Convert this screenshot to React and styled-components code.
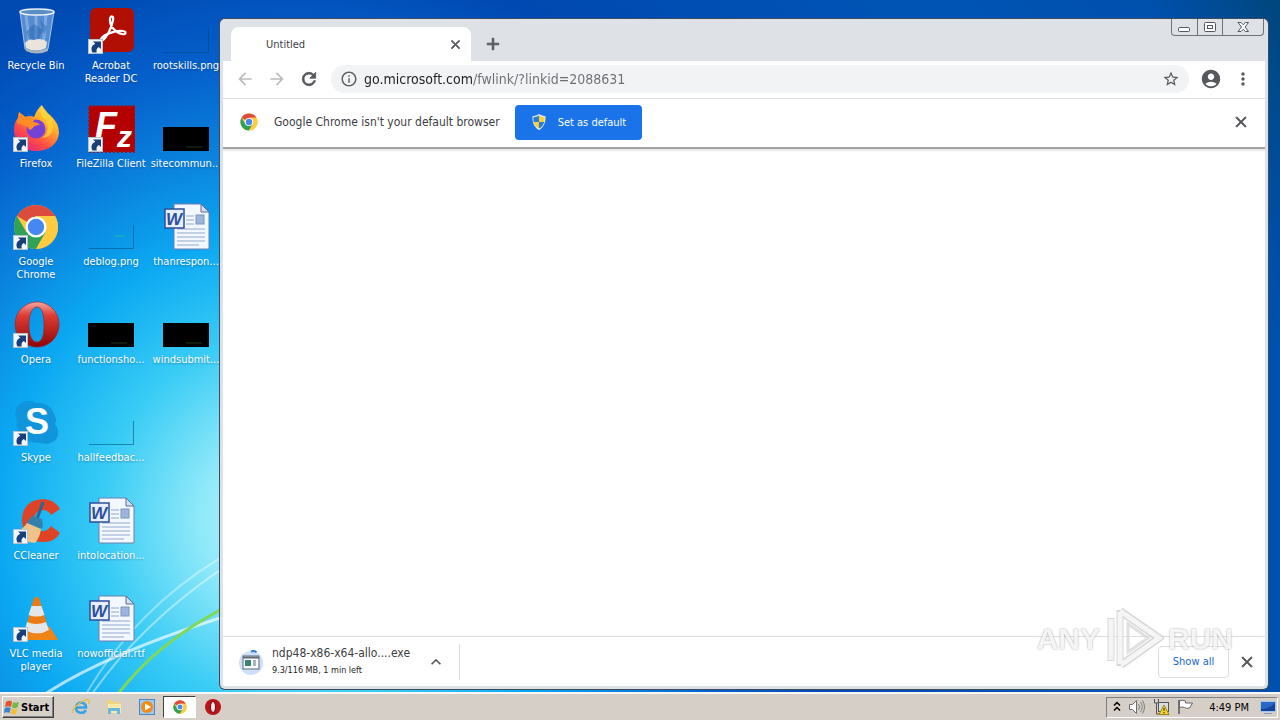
import React, { useState } from "react";
import styled, { createGlobalStyle, css } from "styled-components";
import {
  MdAccountCircle,
  MdAdd,
  MdArrowBack,
  MdArrowForward,
  MdClose,
  MdInfoOutline,
  MdKeyboardArrowUp,
  MdMoreVert,
  MdRefresh,
  MdStarBorder,
} from "react-icons/md";

const Shortcut = () => (
  <g>
    <rect x="1.5" y="32.5" width="14" height="14" fill="#f4f7fa" stroke="#b4c2cf" />
    <path d="M6 34.500h8v7.500l-2.200-2c-2 1.200-2.800 3-2 5.500H5.500c-2-3.500-1-7 2.800-8.700z" fill="#173f7c" />
  </g>
);

const ChromeMark = () => (
  <g>
    <circle cx="24" cy="24" r="22" fill="#fbc93d" />
    <path d="M24 24L4.950 13A22 22 0 0 1 43.050 13H24z" fill="#dd4b3e" />
    <path d="M4.950 13A22 22 0 0 0 24 46l9.500-16.500L24 24l-9.500 5.500z" fill="#2fa257" />
    <path d="M24 13h19.050A22 22 0 0 1 24 46l9.500-16.500z" fill="#fdcc40" />
    <circle cx="24" cy="24" r="10.500" fill="#fff" />
    <circle cx="24" cy="24" r="8.200" fill="#4688f1" />
  </g>
);

const RecycleBinIcon = () => (
  <g>
    <path d="M8 5l5 37q11 6 23 0L42 5z" fill="#bcdcf5" fillOpacity=".45" stroke="#d7e6f2" strokeOpacity=".7" />
    <path d="M14 8l4 33M24 8v34M34 8l-3 33" stroke="#dcefff" strokeOpacity=".3" strokeWidth="3" />
    <path d="M14 25l8-8 9 6-4 9-9 2zM28 13l7 7-3 8" fill="#2464ad" fillOpacity=".45" />
    <path d="M13 36q4-5 9-3 8-3 13 2l-1 6q-10 5-20 0z" fill="#e9e4dc" />
    <path d="M13 41q11 6 23 0v3q-11 5-22 0z" fill="#aab3ba" />
    <ellipse cx="25" cy="5" rx="17" ry="3" fill="#5b8fc4" stroke="#e8f1f7" strokeWidth="1.500" />
  </g>
);

const AcrobatIcon = () => (
  <g>
    <rect x="3" y="1" width="44" height="44" rx="6" fill="#b20f04" />
    <path
      d="M14 32c2-4 14-9 22-8 4 .5 3 4-1 3-6-1-13-8-12-15 .3-4 4-3 3 1-1 7-6 17-10 20-2 1-3 0-2-1z"
      fill="none"
      stroke="#fff"
      strokeWidth="2.200"
    />
    <Shortcut />
  </g>
);

const FirefoxIcon = () => (
  <g>
    <defs>
      <linearGradient id="fox" x1=".9" y1="0" x2=".2" y2="1">
        <stop offset="0" stopColor="#fff14a" />
        <stop offset=".35" stopColor="#ffb02a" />
        <stop offset=".7" stopColor="#ff4d45" />
        <stop offset="1" stopColor="#e0208c" />
      </linearGradient>
    </defs>
    <path
      d="M30 0q2 6 8 10 9 8 9 18c-1 11-10 18-23 18S2 38 2 25q0-8 4-12l1-6q4 3 6 5 5-2 9 0 3-8 8-12z"
      fill="url(#fox)"
    />
    <circle cx="24" cy="24" r="9.500" fill="#7542d8" />
    <path d="M7 7q5 4 8 6 5-1 8 1l-2 3q5 0 7 3-6 0-8 4-4 2-4-2L5 18z" fill="#ff8c25" />
    <path d="M30 1c-4 8 1 11 4 16 4 6 1 14-5 16 8 0 13-5 12-14Q38 9 30 1z" fill="#ffd43a" fillOpacity=".75" />
    <Shortcut />
  </g>
);

const FileZillaIcon = () => (
  <g>
    <rect x="2" y="1" width="46" height="46" fill="#b40000" stroke="#8d1c26" strokeDasharray="2 2" strokeWidth="2" />
    <text x="8" y="33" fill="#fff" fontFamily="Liberation Sans" fontSize="36" fontWeight="700" fontStyle="italic">
      F<tspan fontSize="30" dy="9">z</tspan>
    </text>
    <Shortcut />
  </g>
);

const ChromeIcon = () => (
  <g>
    <ChromeMark />
    <Shortcut />
  </g>
);

const OperaIcon = () => (
  <g>
    <defs>
      <linearGradient id="opera" x1="0" y1="0" x2="0" y2="1">
        <stop offset="0" stopColor="#f7a7a0" />
        <stop offset=".3" stopColor="#dd3c35" />
        <stop offset="1" stopColor="#8f0507" />
      </linearGradient>
    </defs>
    <path
      d="M25 1a22 22.500 0 1 0 .1 0zM25 6c5 0 7 7 7 18s-2 17-7 17-8-6-8-17S20 6 25 6z"
      fill="url(#opera)"
      fillRule="evenodd"
      stroke="#a21f1f"
      strokeWidth=".6"
    />
    <Shortcut />
  </g>
);

const SkypeIcon = () => (
  <g>
    <path d="M14 2q6-1 10 2 16-1 20 16 0 3-1 5 5 7 2 14-6 8-16 5Q11 45 5 29q-1-4 0-8-4-7 1-14 3-4 8-5z" fill="#1095dc" />
    <text x="25" y="35" fill="#fff" textAnchor="middle" fontFamily="Liberation Sans" fontSize="36" fontWeight="700">S</text>
    <Shortcut />
  </g>
);

const CCleanerIcon = () => (
  <g>
    <path d="M48 12Q42 2 31 2 10 3 10 24q1 21 22 21 11 0 16-9l-9-7q-4 6-9 5-8-2-8-11t9-10q5 0 8 5z" fill="#df4325" />
    <path d="M31 5l-6 17" stroke="#236a9b" strokeWidth="3" />
    <path d="M15 25l5-6 10 3 1 8-3 2-13-5z" fill="#347fae" />
    <path d="M15 26l14 6q-1 8-6 14Q9 45 2 35q9-2 13-9z" fill="#efc48a" />
    <Shortcut />
  </g>
);

const VlcIcon = () => (
  <g>
    <path d="M14 32h24l8 13H10z" fill="#f08516" />
    <path d="M22 3q2-2 5 0l10 33q-12 7-24 0z" fill="#ee7a12" />
    <path d="M19.500 11h10l3 9q-8 3-16 0zM15 27q9 4 19 0l3 8q-12 7-24 0z" fill="#e4e6e8" />
    <Shortcut />
  </g>
);

const WordIcon = () => (
  <g>
    <path d="M12 1h27l8 8v37H12z" fill="#f3f7ff" stroke="#6b7fae" />
    <path d="M39 1v8h8z" fill="#d5def2" stroke="#5b6b92" />
    <path d="M24 13h8M24 17h8M24 21h8M15 26h28M15 30h28M15 34h28M15 38h28M15 42h22" stroke="#92a7cf" />
    <rect x="34" y="12" width="8" height="9" fill="#9db5dc" stroke="#7e93bd" />
    <rect x="3" y="6" width="19" height="19" fill="#e6efff" stroke="#2d509c" strokeWidth="1.500" />
    <text x="12" y="22" fill="#2d4e99" textAnchor="middle" fontFamily="Liberation Sans" fontSize="17" fontWeight="700" fontStyle="italic">W</text>
  </g>
);

const BlackImageIcon = () => (
  <g>
    <rect x="1" y="22" width="46" height="24" fill="#000" />
    <path d="M24 42h16" stroke="#1c3414" />
  </g>
);

const ClearImageIcon = () => (
  <path d="M2 45.500h44.500V22" fill="none" stroke="#004a78" strokeOpacity=".55" />
);

const DeblogImageIcon = () => (
  <g>
    <ClearImageIcon />
    <path d="M27 33h11" stroke="#28b7a6" />
  </g>
);

const StartFlag = () => (
  <svg width="16" height="16" viewBox="0 0 16 16">
    <path d="M2 3q3-2 6-.5L7 8Q4 6.500 1 8z" fill="#e2522c" />
    <path d="M9 3q3 1.500 6 0l-1.500 5.500q-3 1.500-5.500 0z" fill="#74b944" />
    <path d="M.8 9q3-1.500 6 0L5.500 14q-3-1.500-5.500 0z" fill="#3b83d2" />
    <path d="M7.800 9.500q3 1.500 5.500.2L12 15q-3 1-5.500-.5z" fill="#f5bd2f" />
  </svg>
);

const ExplorerIcon = () => (
  <svg width="18" height="18" viewBox="0 0 18 18">
    <path d="M4.500 9.500h9.500C14 3 4 3 4 9.700c0 6 8 6.500 9.700 2.300" fill="none" stroke="#38a3e4" strokeWidth="2.600" />
    <path d="M1 15C-1 10 13 0 17 2c1 1 0 3-1 4" fill="none" stroke="#e6bd43" strokeWidth="1.300" />
  </svg>
);

const FolderIcon = () => (
  <svg width="18" height="18" viewBox="0 0 18 18">
    <path d="M2 2h5l1 2h7v11H2z" fill="#f0d37a" />
    <path d="M3 6h13v9H3z" fill="#f9e9a9" />
    <path d="M3 16v-6h12v6h-3v-3H6v3z" fill="#69b8e2" />
  </svg>
);

const MediaIcon = () => (
  <svg width="18" height="18" viewBox="0 0 18 18">
    <rect x="1.500" y="1.500" width="15" height="15" fill="#9fc8ed" stroke="#4a87c7" />
    <circle cx="9" cy="9" r="6" fill="#f28a13" />
    <path d="M7 5.500l6 3.500-6 3.500z" fill="#fff" />
  </svg>
);

const ChromeSmall = ({ size }) => (
  <svg width={size} height={size} viewBox="1 1 46 46">
    <ChromeMark />
  </svg>
);

const OperaSmall = () => (
  <svg width="18" height="18" viewBox="0 0 18 18">
    <circle cx="9" cy="9" r="8" fill="#b8151a" />
    <ellipse cx="9" cy="9" rx="2.500" ry="5.500" fill="#f8e9e8" stroke="#7c0509" />
  </svg>
);

const ShieldIcon = () => (
  <svg width="16" height="16" viewBox="0 0 16 16">
    <path d="M8 0q3 2 6.500 2.200C15 9 12 14 8 16 4 14 1 9 1.500 2.200 5 2 8 0 8 0z" fill="#e8edf2" />
    <path d="M8 1.500V8H2.700q-.5-2-.3-4.800Q5.500 3 8 1.500zM8 8h5.300Q12 12.500 8 14.600z" fill="#2d7bd7" />
    <path d="M8 1.500V8h5.300q.5-2 .3-4.800Q10.500 3 8 1.500zM8 8H2.700Q4 12.500 8 14.600z" fill="#f8cf36" />
  </svg>
);

const DownloadIcon = () => (
  <svg width="26" height="28" viewBox="0 0 26 28">
    <circle cx="13" cy="15" r="12" fill="#cfe0fa" />
    <path d="M13 3.500q3-1.500 5.500.8" fill="none" stroke="#3577d4" strokeWidth="2" />
    <rect x="5" y="8" width="16" height="13" fill="#f6f8f9" stroke="#5b6a75" />
    <path d="M5 9.500h16" stroke="#5b6a75" strokeWidth="2" />
    <rect x="7" y="12" width="6" height="6" fill="#3d8174" />
    <path d="M15 13h3M15 15h3M15 17h3" stroke="#617079" />
  </svg>
);

const MinimizeIcon = () => (
  <svg width="13" height="12" viewBox="0 0 13 12">
    <rect x=".5" y="6.500" width="11" height="4" rx="1" fill="#fff" stroke="#53565e" />
  </svg>
);

const MaximizeIcon = () => (
  <svg width="13" height="12" viewBox="0 0 13 12">
    <rect x=".5" y="1.500" width="11" height="9" rx="1" fill="#fff" stroke="#53565e" />
    <rect x="3.500" y="4.500" width="5" height="3" fill="#fff" stroke="#53565e" />
  </svg>
);

const CloseWindowIcon = () => (
  <svg width="13" height="12" viewBox="0 0 13 12">
    <path d="M1 1.500h3l2.300 2.300 2.200-2.300h3L8 6l3.500 4.500h-3L6.300 8.200 4 10.500H1L4.500 6z" fill="#fff" stroke="#53565e" />
  </svg>
);

const SpeakerIcon = () => (
  <svg width="18" height="16" viewBox="0 0 18 16">
    <path d="M1.500 5.500h3l4-4v13l-4-4h-3z" fill="#fff" stroke="#6d6d6d" />
    <path d="M10.500 5q2 3 0 6M12.500 3q3.500 5 0 10M14.500 1.500q4 6.500 0 13" fill="none" stroke="#7d7d7d" />
  </svg>
);

const NetworkIcon = () => (
  <svg width="17" height="16" viewBox="0 0 17 16">
    <rect x="5.500" y="3.500" width="10" height="9" fill="#d8dde1" stroke="#555" />
    <path d="M1.500 0v4h4V0M3.500 4v11h5" fill="none" stroke="#555" />
    <path d="M11 6l5 9.500H6z" fill="#f8d62c" stroke="#9b8412" />
    <path d="M11 9v3M11 13v1.500" stroke="#222" />
  </svg>
);

const FlagIcon = () => (
  <svg width="17" height="16" viewBox="0 0 17 16">
    <path d="M2 1v14" stroke="#555" strokeWidth="1.500" />
    <path d="M2.500 2q3-1.500 6 0v2h7q-1 2-3 5-3 1-5-.5-2-1-5 0z" fill="#fff" stroke="#666" />
  </svg>
);

const ShowDesktopIcon = () => (
  <svg width="16" height="16" viewBox="0 0 16 16">
    <rect x=".5" y="2.500" width="15" height="10" fill="#2a68c4" stroke="#a8c4e4" />
    <path d="M1 10q8 0 14-6v8H1z" fill="#1743a0" />
    <path d="M4 14.500h8" stroke="#7ea0cc" />
  </svg>
);

const files = [
  { name: "Recycle Bin", Icon: RecycleBinIcon },
  { name: "Firefox", Icon: FirefoxIcon },
  { name: "Google Chrome", Icon: ChromeIcon },
  { name: "Opera", Icon: OperaIcon },
  { name: "Skype", Icon: SkypeIcon },
  { name: "CCleaner", Icon: CCleanerIcon },
  { name: "VLC media player", Icon: VlcIcon },
  { name: "Acrobat Reader DC", Icon: AcrobatIcon },
  { name: "FileZilla Client", Icon: FileZillaIcon },
  { name: "deblog.png", Icon: DeblogImageIcon },
  { name: "functionsho...", Icon: BlackImageIcon },
  { name: "hallfeedbac...", Icon: ClearImageIcon },
  { name: "intolocation...", Icon: WordIcon },
  { name: "nowofficial.rtf", Icon: WordIcon },
  { name: "rootskills.png", Icon: ClearImageIcon },
  { name: "sitecommun...", Icon: BlackImageIcon },
  { name: "thanrespon...", Icon: WordIcon },
  { name: "windsubmit...", Icon: BlackImageIcon },
];

const App = () => {
  const [url, setUrl] = useState("go.microsoft.com/fwlink/?linkid=2088631");

  return (
    <Screen>
      <GlobalStyle />
      <Desktop>
        <Streaks viewBox="0 0 220 692" width="220" height="692" aria-hidden="true">
          <path d="M45 694Q105 655 220 618" stroke="#fff" strokeOpacity=".65" strokeWidth="3" />
          <path d="M86 694Q135 610 220 558" stroke="#fff" strokeOpacity=".4" strokeWidth="2" />
          <path d="M92 694Q140 625 220 570" stroke="#fff" strokeOpacity=".45" strokeWidth="2" />
          <path d="M118 694Q155 645 220 610" stroke="#7fd85a" strokeWidth="3" />
        </Streaks>
        <FileGrid>
          {files.map(({ name, Icon }) => (
            <li key={name}>
              <FileButton>
                <svg width="48" height="48" viewBox="0 0 48 48" fill="none" aria-hidden="true">
                  <Icon />
                </svg>
                <FileName>{name}</FileName>
              </FileButton>
            </li>
          ))}
        </FileGrid>

        <Window>
          <TabStrip>
            <Tab>
              <TabTitle>Untitled</TabTitle>
              <IconButton $size={20} $bold aria-label="Close tab"><MdClose size={15} /></IconButton>
            </Tab>
            <IconButton $size={28} $bold aria-label="New tab"><MdAdd size={20} /></IconButton>
            <WindowControls>
              <WindowControl aria-label="Minimize"><MinimizeIcon /></WindowControl>
              <WindowControl aria-label="Maximize"><MaximizeIcon /></WindowControl>
              <WindowControl $wide aria-label="Close"><CloseWindowIcon /></WindowControl>
            </WindowControls>
          </TabStrip>

          <Toolbar>
            <NavGroup>
              <IconButton $size={28} $muted aria-label="Back"><MdArrowBack size={20} /></IconButton>
              <IconButton $size={28} $muted aria-label="Forward"><MdArrowForward size={20} /></IconButton>
              <IconButton $size={28} $bold aria-label="Reload"><MdRefresh size={20} /></IconButton>
            </NavGroup>
            <Omnibox>
              <MdInfoOutline size={18} />
              <UrlInput aria-label="Address" value={url} onChange={(e) => setUrl(e.target.value)} />
              <IconButton $size={20} aria-label="Bookmark"><MdStarBorder size={18} /></IconButton>
            </Omnibox>
            <NavGroup>
              <IconButton $size={28} aria-label="Profile"><MdAccountCircle size={22} /></IconButton>
              <IconButton $size={28} aria-label="Menu"><MdMoreVert size={20} /></IconButton>
            </NavGroup>
          </Toolbar>

          <InfoBar>
            <ChromeSmall size={18} />
            <InfoText>Google Chrome isn't your default browser</InfoText>
            <DefaultButton><ShieldIcon />Set as default</DefaultButton>
            <PushRight>
              <IconButton $size={28} $bold aria-label="Dismiss"><MdClose size={18} /></IconButton>
            </PushRight>
          </InfoBar>

          <PageArea />

          <DownloadBar>
            <DownloadItem>
              <DownloadIcon />
              <DownloadText>
                <DownloadName>ndp48-x86-x64-allo....exe</DownloadName>
                <DownloadStatus>9.3/116 MB, 1 min left</DownloadStatus>
              </DownloadText>
              <IconButton $size={20} aria-label="Download options"><MdKeyboardArrowUp size={20} /></IconButton>
            </DownloadItem>
            <PushRight>
              <ShowAll>Show all</ShowAll>
              <IconButton $size={20} $bold aria-label="Close downloads"><MdClose size={18} /></IconButton>
            </PushRight>
          </DownloadBar>

          <Watermark>
            ANY
            <svg width="60" height="66" viewBox="0 0 60 66" fill="none" aria-hidden="true">
              <path d="M7 12v43M16 4v56" stroke="#d0d0d0" strokeWidth="7" />
              <path d="M16 5l39 27-38 27" stroke="#d0d0d0" strokeWidth="8" />
              <path d="M24 18l20 14-20 14z" stroke="#dadada" strokeWidth="3" />
              <path d="M7 13v41M16 6v52M16 5l39 27-38 27" stroke="#f4f4f4" strokeWidth="5" />
            </svg>
            RUN
          </Watermark>
        </Window>
      </Desktop>

      <Taskbar>
        <StartButton><StartFlag />Start</StartButton>
        <QuickLaunch>
          <TaskButton aria-label="Internet Explorer"><ExplorerIcon /></TaskButton>
          <TaskButton aria-label="Libraries"><FolderIcon /></TaskButton>
          <TaskButton aria-label="Media Player"><MediaIcon /></TaskButton>
          <TaskButton $active aria-label="Google Chrome"><ChromeSmall size={14} /></TaskButton>
          <TaskButton aria-label="Opera"><OperaSmall /></TaskButton>
        </QuickLaunch>
        <Tray>
          <svg width="8" height="12" viewBox="0 0 8 12" fill="none" stroke="#000" strokeWidth="1.500" aria-hidden="true">
            <path d="M1 4.500l3-3 3 3M1 9.500l3-3 3 3" />
          </svg>
          <SpeakerIcon />
          <NetworkIcon />
          <FlagIcon />
          <Clock>4:49 PM</Clock>
          <ShowDesktopIcon />
        </Tray>
      </Taskbar>
    </Screen>
  );
};

export default App;

const GlobalStyle = createGlobalStyle`
  * {
    box-sizing: border-box;
  }

  body {
    margin: 0;
    overflow: hidden;
  }

  button, input {
    font: inherit;
    color: inherit;
    padding: 0;
    border: 0;
    background: none;
  }

  svg {
    flex-shrink: 0;
  }
`;

const Screen = styled.div`
  display: flex;
  flex-direction: column;
  min-height: 100vh;
  font-family: Tahoma, 'DejaVu Sans Condensed', 'Liberation Sans', sans-serif;
  font-size: 11px;
`;

const Desktop = styled.main`
  position: relative;
  flex: 1;
  background: radial-gradient(
    circle at 290px 520px,
    #c8f6fb 0,
    #8fe9f9 90px,
    #37cbf5 190px,
    #0ba8f2 290px,
    #0a84de 370px,
    #0560cc 460px,
    #0049b2 560px,
    #0055b4 800px,
    #0050ae 1000px,
    #00477f 1110px
  );
`;

const Streaks = styled.svg`
  position: absolute;
  left: 0;
  bottom: 0;
  fill: none;
`;

const FileGrid = styled.ul`
  position: relative;
  display: grid;
  grid-auto-flow: column;
  grid-template-rows: repeat(7, 85px);
  grid-auto-columns: 72px;
  gap: 13px 3px;
  margin: 0;
  padding: 7px 0 0;
  list-style: none;
`;

const FileButton = styled.button`
  display: flex;
  flex-direction: column;
  align-items: center;
  gap: 4px;
  width: 100%;
`;

const FileName = styled.span`
  max-width: 72px;
  line-height: 13px;
  text-align: center;
  color: #fff;
  text-shadow: 0 1px 2px rgba(0, 40, 90, 0.4);
`;

const Window = styled.section`
  position: absolute;
  inset: 19px 12px 3px 220px;
  display: flex;
  flex-direction: column;
  background: #fff;
  border: 3px solid #dee1e6;
  border-top: 0;
  border-radius: 5px;
  box-shadow: 0 0 0 1px #3c4c60;
  color: #5f6368;
`;

const TabStrip = styled.div`
  display: flex;
  align-items: center;
  height: 42px;
  padding: 8px 1px 0 8px;
  background: #dee1e6;
`;

const Tab = styled.div`
  display: flex;
  align-items: center;
  justify-content: space-between;
  width: 240px;
  height: 34px;
  margin-right: 8px;
  padding: 0 6px 0 35px;
  background: #fff;
  border-radius: 8px 8px 0 0;
`;

const TabTitle = styled.span`
  color: #3c4043;
`;

const IconButton = styled.button`
  display: flex;
  align-items: center;
  justify-content: center;
  width: ${({ $size }) => $size}px;
  height: ${({ $size }) => $size}px;
  color: ${({ $muted }) => ($muted ? "#babcbe" : "#55585c")};

  ${({ $bold }) =>
    $bold &&
    css`
      path:not([fill]) {
        stroke-width: 1;
      }
    `}
`;

const WindowControls = styled.div`
  display: flex;
  align-self: flex-start;
  height: 17px;
  margin: -8px 0 0 auto;
  border: 1px solid #6f747c;
  border-top: 0;
  border-radius: 0 0 4px 4px;
`;

const WindowControl = styled.button`
  display: flex;
  align-items: center;
  justify-content: center;
  width: ${({ $wide }) => ($wide ? 41 : 25)}px;

  & + & {
    border-left: 1px solid #6f747c;
  }
`;

const Toolbar = styled.div`
  display: flex;
  align-items: center;
  gap: 8px;
  height: 38px;
  padding: 0 8px 1px;
  border-bottom: 1px solid #dadce0;
`;

const NavGroup = styled.div`
  display: flex;
  gap: 4px;
`;

const Omnibox = styled.div`
  display: flex;
  flex: 1;
  align-items: center;
  gap: 6px;
  height: 28px;
  padding: 0 8px 0 9px;
  background: #f1f3f4;
  border-radius: 14px;
`;

/* the host part of the address is darker than its path */
const UrlInput = styled.input`
  flex: 1;
  min-width: 0;
  height: 20px;
  font-size: 14px;
  outline: 0;
  color: transparent;
  background: linear-gradient(to right, #202124 109px, #6b6f74 109px);
  background-clip: text;
  -webkit-background-clip: text;
`;

const InfoBar = styled.div`
  position: relative;
  display: flex;
  align-items: center;
  height: 50px;
  padding: 0 10px 2px 17px;
  border-bottom: 2px solid #a3a4a6;
  box-shadow: 0 2px 2px rgba(0, 0, 0, 0.1);
`;

const InfoText = styled.span`
  margin: 0 15px 0 16px;
  font-size: 12px;
  color: #3c4043;
`;

const DefaultButton = styled.button`
  display: flex;
  align-items: center;
  gap: 11px;
  height: 35px;
  padding: 0 16px;
  background: #1a73e8;
  border-radius: 4px;
  color: #fff;
`;

const PushRight = styled.div`
  display: flex;
  align-items: center;
  gap: 8px;
  margin-left: auto;
`;

const PageArea = styled.div`
  flex: 1;
`;

const DownloadBar = styled.div`
  display: flex;
  align-items: center;
  height: 50px;
  padding: 0 8px 0 15px;
  border-top: 1px solid #dadce0;
`;

const DownloadItem = styled.div`
  display: flex;
  align-items: center;
  width: 222px;
  height: 36px;
  padding-right: 13px;
  border-right: 1px solid #dadce0;
`;

const DownloadText = styled.div`
  flex: 1;
  padding-left: 8px;
  line-height: 17px;
`;

const DownloadName = styled.div`
  font-size: 12px;
  color: #3c4043;
  white-space: nowrap;
`;

const DownloadStatus = styled.div`
  font-size: 9px;
  color: #202124;
`;

const ShowAll = styled.button`
  width: 71px;
  height: 32px;
  border: 1px solid #dadce0;
  border-radius: 4px;
  color: #1967d2;
`;

const Watermark = styled.div`
  position: absolute;
  right: 32px;
  bottom: 14px;
  display: flex;
  align-items: center;
  gap: 4px;
  font-family: 'Liberation Sans', sans-serif;
  font-size: 30px;
  font-weight: 700;
  line-height: 30px;
  color: #f4f4f4;
  text-shadow: 0 0 2px #888;
  opacity: 0.85;
  pointer-events: none;
`;

const raised = css`
  border: 1px solid;
  border-color: #fff #404040 #404040 #fff;
  box-shadow: inset -1px -1px #808080;
`;

const Taskbar = styled.footer`
  display: flex;
  align-items: center;
  height: 28px;
  padding: 0 2px;
  background: #d6cfc7;
  border-top: 2px solid #f8f7f5;
`;

const StartButton = styled.button`
  ${raised}
  display: flex;
  align-items: center;
  gap: 1px;
  width: 52px;
  height: 22px;
  padding-left: 1px;
  font-weight: 700;
  color: #000;
`;

const QuickLaunch = styled.div`
  display: flex;
  margin-left: 10px;
`;

const TaskButton = styled.button`
  display: flex;
  align-items: center;
  justify-content: center;
  width: 33px;
  height: 22px;

  ${({ $active }) =>
    $active &&
    css`
      background: #fff;
      border: 1px solid;
      border-color: #404040 #fff #fff #404040;
    `}
`;

const Tray = styled.div`
  display: flex;
  align-items: center;
  gap: 7px;
  height: 21px;
  margin-left: auto;
  padding: 0 1px 0 6px;
  border: 1px solid;
  border-color: #808080 #fff #fff #808080;
  color: #000;
`;

const Clock = styled.time`
  margin: 0 4px 0 8px;
`;
